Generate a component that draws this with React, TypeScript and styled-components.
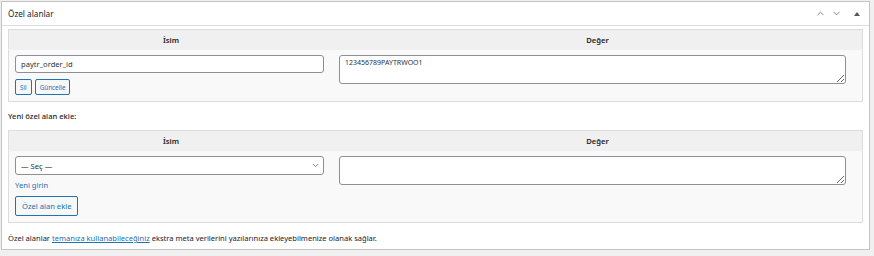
import React from 'react';
import styled, {createGlobalStyle} from 'styled-components';
import {ChevronDown, ChevronUp} from 'lucide-react';

const GlobalStyle = createGlobalStyle`
  body {
    margin: 0;
    padding: 1px 0 0 1px;
    background: #f0f0f1;
    font-family: "Noto Sans", "Open Sans", sans-serif;
    color: #1d2327;
  }
`;

const PostBox = styled.div`
  width: 869px;
  height: 249px;
  box-sizing: border-box;
  background: #fff;
  border: 1px solid #c3c4c7;
  box-shadow: 0 1px 1px rgba(0, 0, 0, .04);
`;

const Header = styled.div`
  height: 23px;
  display: flex;
  align-items: center;
  justify-content: space-between;
  padding: 0 6px;
  border-bottom: 1px solid #dcdcde;
`;

const Title = styled.h2`
  margin: 0;
  font-size: 8.2px;
  font-weight: 400;
`;

const Handles = styled.div`
  display: flex;
  align-items: center;
  gap: 5px;
  padding-right: 3px;
  color: #787c82;
`;

const Toggle = styled.span`
  width: 0;
  height: 0;
  margin-left: 7px;
  border-left: 3px solid transparent;
  border-right: 3px solid transparent;
  border-bottom: 4px solid #50575e;
`;

const Inside = styled.div`
  padding: 3px 7px 0 6px;
`;

const Table = styled.table`
  width: 855px;
  border-collapse: collapse;
  border: 1px solid #dcdcde;
  background: #f9f9f9;
  font-size: 7.6px;
`;

const Th = styled.th<{$w?: string}>`
  width: ${p => p.$w || 'auto'};
  height: 19px;
  padding: 0;
  background: #f0f0f1;
  font-weight: 600;
  text-align: center;
  border-bottom: 1px solid #f0f0f1;
`;

const Td = styled.td`
  vertical-align: top;
  padding: 5px 0 0 6px;
`;

const TextInput = styled.input`
  display: block;
  width: 309px;
  height: 18px;
  box-sizing: border-box;
  padding: 0 5px;
  border: 1px solid #8c8f94;
  border-radius: 3px;
  font: inherit;
  font-size: 7.6px;
  color: #2c3338;
  background: #fff;
`;

const Area = styled.textarea`
  display: block;
  width: 507px;
  height: 29px;
  box-sizing: border-box;
  padding: 2px 5px;
  border: 1px solid #8c8f94;
  border-radius: 3px;
  font: inherit;
  font-size: 7px;
  color: #2c3338;
  background: #fff;
  resize: vertical;
`;

const ButtonRow = styled.div`
  display: flex;
  gap: 3px;
  margin-top: 6px;
  padding-bottom: 6px;
`;

const Button = styled.button<{$small?: boolean}>`
  height: ${p => (p.$small ? '16px' : '20px')};
  padding: ${p => (p.$small ? '0 4px' : '0 6px')};
  box-sizing: border-box;
  border: 1px solid #2271b1;
  border-radius: 2px;
  background: #f6f7f7;
  color: #2271b1;
  font: inherit;
  font-size: ${p => (p.$small ? '6.3px' : '7.6px')};
  cursor: pointer;
`;

const SelectWrap = styled.div`
  position: relative;
  width: 309px;
`;

const Select = styled.select`
  display: block;
  width: 100%;
  height: 19px;
  box-sizing: border-box;
  padding: 0 5px;
  appearance: none;
  border: 1px solid #8c8f94;
  border-radius: 3px;
  background: #fff;
  font: inherit;
  font-size: 7.6px;
  color: #2c3338;
`;

const SelectArrow = styled(ChevronDown)`
  position: absolute;
  right: 4px;
  top: 5px;
  color: #50575e;
  pointer-events: none;
`;

const Link = styled.a`
  color: #2271b1;
  text-decoration: underline;
`;

const NewLink = styled.div`
  margin: 5px 0 5px;
  font-size: 7.6px;
  color: #2271b1;
`;

const AddLabel = styled.p`
  margin: 0;
  height: 28px;
  display: flex;
  align-items: center;
  font-size: 7.6px;
  font-weight: 500;
`;

const Note = styled.p`
  margin: 0;
  padding-top: 10px;
  font-size: 7.55px;
`;

export default function App() {
  return (
    <>
      <GlobalStyle/>
      <PostBox>
        <Header>
          <Title>Özel alanlar</Title>
          <Handles>
            <ChevronUp size={11} strokeWidth={2}/>
            <ChevronDown size={11} strokeWidth={2}/>
            <Toggle/>
          </Handles>
        </Header>
        <Inside>
          <Table>
            <thead>
              <tr>
                <Th $w="38%">İsim</Th>
                <Th>Değer</Th>
              </tr>
            </thead>
            <tbody>
              <tr>
                <Td>
                  <TextInput defaultValue="paytr_order_id"/>
                  <ButtonRow>
                    <Button $small>Sil</Button>
                    <Button $small>Güncelle</Button>
                  </ButtonRow>
                </Td>
                <Td>
                  <Area defaultValue="123456789PAYTRWOO1"/>
                </Td>
              </tr>
            </tbody>
          </Table>
          <AddLabel>Yeni özel alan ekle:</AddLabel>
          <Table>
            <thead>
              <tr>
                <Th $w="38%">İsim</Th>
                <Th>Değer</Th>
              </tr>
            </thead>
            <tbody>
              <tr>
                <Td>
                  <SelectWrap>
                    <Select defaultValue="">
                      <option value="">— Seç —</option>
                    </Select>
                    <SelectArrow size={9} strokeWidth={2}/>
                  </SelectWrap>
                  <NewLink>Yeni girin</NewLink>
                  <ButtonRow>
                    <Button>Özel alan ekle</Button>
                  </ButtonRow>
                </Td>
                <Td>
                  <Area/>
                </Td>
              </tr>
            </tbody>
          </Table>
          <Note>
            Özel alanlar <Link href="#">temanıza kullanabileceğiniz</Link> ekstra meta verilerini yazılarınıza ekleyebilmenize olanak sağlar.
          </Note>
        </Inside>
      </PostBox>
    </>
  );
}
